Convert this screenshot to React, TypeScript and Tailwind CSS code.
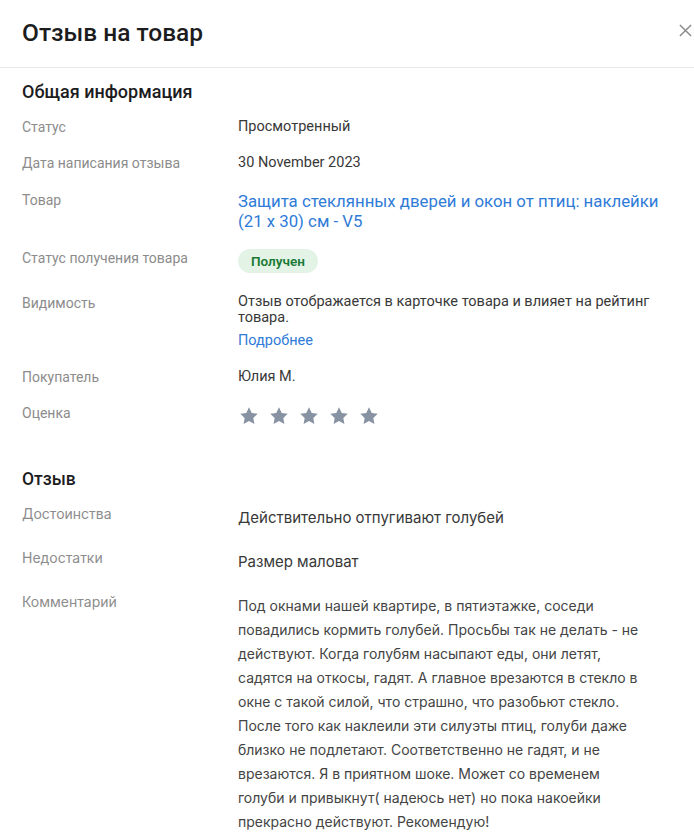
import React from "react";

const Star = () => (
  <svg viewBox="0 0 24 24" className="w-[22px] h-[22px] fill-[#8792a2]">
    <path d="M12 2.5l2.94 6.1 6.56.86-4.8 4.6 1.2 6.54L12 17.4l-5.9 3.2 1.2-6.54-4.8-4.6 6.56-.86z" />
  </svg>
);

const Row = ({ label, children, className = "" }: { label: string; children: React.ReactNode; className?: string }) => (
  <div className={"flex " + className}>
    <div className="w-[216px] flex-shrink-0 text-[14px] text-[#8c8c8c]">{label}</div>
    <div className="flex-1 text-[#383838]">{children}</div>
  </div>
);

export default function App() {
  return (
    <div className="w-[694px] h-[836px] overflow-hidden bg-white font-['Roboto',sans-serif]">
      {/* Header */}
      <div className="flex items-center justify-between h-[68px] pl-[22px] pr-[2px] border-b border-[#e5e7eb]">
        <h1 className="text-[24.5px] font-medium text-[#1c1c1e]">Отзыв на товар</h1>
        <svg viewBox="0 0 14 14" className="w-[13px] h-[13px] stroke-[#8a8a8a] -mt-[6px]" strokeWidth="1.6">
          <path d="M1 1l12 12M13 1L1 13" />
        </svg>
      </div>

      {/* General info */}
      <div className="px-[22px] pt-[14px] text-[14.5px] leading-[20px]">
        <h2 className="text-[18px] font-medium text-[#1c1c1e] mb-[15px]">Общая информация</h2>
        <Row label="Статус" className="mb-[16px]">Просмотренный</Row>
        <Row label="Дата написания отзыва" className="mb-[17px]">30 November 2023</Row>
        <Row label="Товар" className="mb-[17px]">
          <span className="text-[#2f7bd8] text-[16.8px] leading-[20px] block mt-[1px]">
            Защита стеклянных дверей и окон от птиц: наклейки (21 х 30) см - V5
          </span>
        </Row>
        <Row label="Статус получения товара" className="mb-[20px]">
          <span className="inline-flex items-center h-[24px] px-[13px] rounded-full bg-[#e3f3e6] text-[#1b7a35] text-[13.5px] font-semibold mt-[1px]">
            Получен
          </span>
        </Row>
        <Row label="Видимость" className="mb-[16px]">
          <div className="leading-[16px] mt-[1px]">Отзыв отображается в карточке товара и влияет на рейтинг товара.</div>
          <div className="text-[#2f7bd8] mt-[5px]">Подробнее</div>
        </Row>
        <Row label="Покупатель" className="mb-[16px]">Юлия М.</Row>
        <Row label="Оценка">
          <div className="flex gap-[8px] mt-[2px]">
            <Star /><Star /><Star /><Star /><Star />
          </div>
        </Row>
      </div>

      {/* Review */}
      <div className="px-[22px] pt-[39px]">
        <h2 className="text-[17.5px] font-medium text-[#1c1c1e] mb-[10px]">Отзыв</h2>
        <div className="font-['Inter',sans-serif] leading-[24px]">
          <Row label="Достоинства" className="mb-[16px]">
            <span className="block mt-[4px] text-[15px]">Действительно отпугивают голубей</span>
          </Row>
          <Row label="Недостатки" className="mb-[16px]">
            <span className="block mt-[4px] text-[15px]">Размер маловат</span>
          </Row>
          <Row label="Комментарий">
            <p className="mt-[4px] pr-[30px] text-[14px] text-[#444]">
              Под окнами нашей квартире, в пятиэтажке, соседи повадились кормить голубей. Просьбы так не делать - не действуют. Когда голубям насыпают еды, они летят, садятся на откосы, гадят. А главное врезаются в стекло в окне с такой силой, что страшно, что разобьют стекло. После того как наклеили эти силуэты птиц, голуби даже близко не подлетают. Соответственно не гадят, и не врезаются. Я в приятном шоке. Может со временем голуби и привыкнут( надеюсь нет) но пока накоейки прекрасно действуют. Рекомендую!
            </p>
          </Row>
        </div>
      </div>
    </div>
  );
}
